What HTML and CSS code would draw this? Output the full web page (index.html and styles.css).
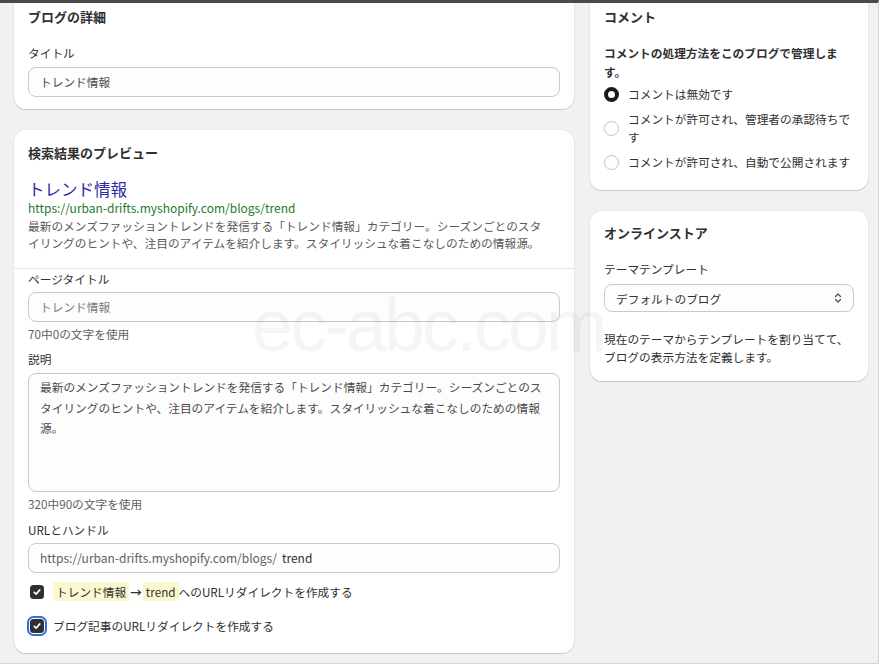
FILE: index.html
```html
<!DOCTYPE html>
<html lang="ja">
<head>
    <meta charset="UTF-8">
    <meta name="viewport" content="width=device-width, initial-scale=1.0">
    <title>ブログの編集</title>
    <link rel="stylesheet" href="styles.css">
</head>
<body>
    <div class="frame">
        <div class="layout">
            <!-- 左カラム -->
            <div class="main">
                <!-- ブログの詳細 -->
                <section class="card card-cut">
                    <h2 class="card-title">ブログの詳細</h2>
                    <div class="field field-first">
                        <div class="label">タイトル</div>
                        <div class="input">トレンド情報</div>
                    </div>
                </section>

                <!-- 検索結果のプレビュー -->
                <section class="card card-seo">
                    <div class="preview">
                        <h2 class="card-title">検索結果のプレビュー</h2>
                        <div class="preview-title">トレンド情報</div>
                        <div class="preview-url">https://urban-drifts.myshopify.com/blogs/trend</div>
                        <p class="preview-desc">最新のメンズファッショントレンドを発信する「トレンド情報」カテゴリー。シーズンごとのスタイリングのヒントや、注目のアイテムを紹介します。スタイリッシュな着こなしのための情報源。</p>
                    </div>
                    <div class="seo-form">
                        <div class="label">ページタイトル</div>
                        <div class="input input-placeholder">トレンド情報</div>
                        <div class="help">70中0の文字を使用</div>

                        <div class="label label-gap">説明</div>
                        <div class="textarea">最新のメンズファッショントレンドを発信する「トレンド情報」カテゴリー。シーズンごとのスタイリングのヒントや、注目のアイテムを紹介します。スタイリッシュな着こなしのための情報源。</div>
                        <div class="help">320中90の文字を使用</div>

                        <div class="label label-gap2">URLとハンドル</div>
                        <div class="input input-url"><span class="url-prefix">https://urban-drifts.myshopify.com/blogs/</span><span class="url-handle">trend</span></div>

                        <label class="check check-first">
                            <span class="box">
                                <svg width="10" height="10" viewBox="0 0 10 10"><path d="M2.2 5.2 L4.1 7.1 L7.8 2.9" fill="none" stroke="#fff" stroke-width="1.6" stroke-linecap="round" stroke-linejoin="round"/></svg>
                            </span>
                            <span><mark>トレンド情報</mark><b class="arrow">→</b><mark>trend</mark>へのURLリダイレクトを作成する</span>
                        </label>
                        <label class="check check-second">
                            <span class="box box-focus">
                                <svg width="10" height="10" viewBox="0 0 10 10"><path d="M2.2 5.2 L4.1 7.1 L7.8 2.9" fill="none" stroke="#fff" stroke-width="1.6" stroke-linecap="round" stroke-linejoin="round"/></svg>
                            </span>
                            <span>ブログ記事のURLリダイレクトを作成する</span>
                        </label>
                    </div>
                </section>
            </div>

            <!-- 右カラム -->
            <div class="side">
                <!-- コメント -->
                <section class="card card-cut card-comments">
                    <h2 class="card-title">コメント</h2>
                    <p class="sub-title">コメントの処理方法をこのブログで管理します。</p>
                    <div class="radios">
                        <div class="radio">
                            <span class="dot dot-on"></span>
                            <span>コメントは無効です</span>
                        </div>
                        <div class="radio">
                            <span class="dot"></span>
                            <span>コメントが許可され、管理者の承認待ちです</span>
                        </div>
                        <div class="radio">
                            <span class="dot"></span>
                            <span>コメントが許可され、自動で公開されます</span>
                        </div>
                    </div>
                </section>

                <!-- オンラインストア -->
                <section class="card card-store">
                    <h2 class="card-title">オンラインストア</h2>
                    <div class="label label-store">テーマテンプレート</div>
                    <div class="select">
                        <span>デフォルトのブログ</span>
                        <svg width="10" height="12" viewBox="0 0 10 12"><path d="M2.5 4.5 L5 2 L7.5 4.5 M2.5 7.5 L5 10 L7.5 7.5" fill="none" stroke="#4a4a4a" stroke-width="1.2" stroke-linecap="round" stroke-linejoin="round"/></svg>
                    </div>
                    <p class="store-desc">現在のテーマからテンプレートを割り当てて、ブログの表示方法を定義します。</p>
                </section>
            </div>
        </div>

        <!-- ウォーターマーク -->
        <div class="watermark">ec-abc.com</div>
    </div>
</body>
</html>
```

FILE: styles.css
```css
body {
    margin: 0;
    background-color: #ffffff;
    color: #303030;
    font-family: "Noto Sans CJK JP", sans-serif;
    font-size: 11.7px;
}

/* 画面の枠 */
.frame {
    position: relative;
    width: 879px;
    height: 664px;
    box-sizing: border-box;
    background-color: #f1f1f1;
    border-top: 3px solid #4a4a4a;
    border-right: 1px solid #d6d6d6;
    border-bottom: 1px solid #d6d6d6;
    overflow: hidden;
}

.layout {
    display: flex;
    gap: 16px;
    padding-left: 14px;
}

.main {
    width: 560px;
    display: flex;
    flex-direction: column;
    gap: 21px;
}

.side {
    width: 278px;
    display: flex;
    flex-direction: column;
    gap: 21px;
}

/* カード */
.card {
    background-color: #ffffff;
    border-radius: 12px;
    box-shadow: 0 1px 1px rgba(0, 0, 0, 0.14), 0 0 0 1px rgba(0, 0, 0, 0.03);
    padding: 14px 14px 12px;
}

/* 上が切れているカード */
.card-cut {
    border-top-left-radius: 0;
    border-top-right-radius: 0;
    padding-top: 5px;
}

.card-title {
    margin: 0;
    font-size: 13px;
    font-weight: 700;
    line-height: 18px;
    color: #303030;
}

.label {
    line-height: 18px;
    margin-bottom: 5px;
}

.field-first {
    margin-top: 18px;
}

/* 入力欄 */
.input {
    height: 30px;
    box-sizing: border-box;
    border: 1px solid #c9c9c9;
    border-radius: 8px;
    background-color: #fdfdfd;
    padding: 0 11px;
    line-height: 28px;
    color: #4a4a4a;
    white-space: nowrap;
}

.input-placeholder {
    color: #7a7a7a;
}

.input-url {
    font-size: 12px;
}

.url-prefix {
    color: #616161;
    margin-right: 5px;
}

.url-handle {
    color: #303030;
}

.textarea {
    height: 119px;
    box-sizing: border-box;
    border: 1px solid #c9c9c9;
    border-radius: 8px;
    background-color: #fdfdfd;
    padding: 3px 11px 3px 11px;
    line-height: 20.5px;
    color: #4a4a4a;
}

.help {
    margin-top: 3px;
    line-height: 18px;
    color: #616161;
}

/* 検索結果のプレビュー */
.card-seo {
    padding: 0 0 17px;
}

.preview {
    padding: 14px 14px 17px;
    border-bottom: 1px solid #e6e6e6;
}

.preview-title {
    margin-top: 16px;
    font-size: 16.5px;
    line-height: 22px;
    color: #2b2ba6;
}

.preview-url {
    font-size: 12px;
    line-height: 16px;
    color: #257a2c;
}

.preview-desc {
    margin: 1px 0 0;
    padding-right: 16px;
    line-height: 17px;
    color: #595959;
}

.seo-form {
    padding: 1px 14px 0;
}

.label-gap {
    margin-top: 7px;
}

.label-gap2 {
    margin-top: 8px;
    margin-bottom: 4px;
}

.seo-form .label:first-child {
    margin-bottom: 4px;
}

/* チェックボックス */
.check {
    display: flex;
    align-items: center;
    gap: 9px;
    line-height: 20px;
    padding-left: 2px;
}

.check-first {
    margin-top: 9px;
}

.check-second {
    margin-top: 14px;
}

.box {
    width: 14px;
    height: 14px;
    border-radius: 3.5px;
    background-color: #303030;
    display: flex;
    align-items: center;
    justify-content: center;
    flex-shrink: 0;
}

.box-focus {
    outline: 2px solid #2f6fd6;
    outline-offset: 1px;
}

mark {
    background-color: #fbf8cf;
    color: #303030;
    padding: 1px 3px;
}

.arrow {
    font-weight: 700;
    margin: 0 1px;
}

/* コメント */
.card-comments {
    padding-bottom: 19px;
}

.sub-title {
    margin: 17px 0 0;
    font-weight: 700;
    line-height: 19px;
}

.radios {
    margin-top: 4px;
    display: flex;
    flex-direction: column;
    gap: 7px;
}

.radio {
    display: flex;
    align-items: center;
    gap: 9px;
    line-height: 18px;
}

.dot {
    width: 15px;
    height: 15px;
    box-sizing: border-box;
    border-radius: 50%;
    border: 1px solid #c4c4c4;
    flex-shrink: 0;
}

.dot-on {
    border: 4px solid #1a1a1a;
}

/* オンラインストア */
.card-store {
    padding: 13px 14px 15px;
}

.label-store {
    margin-top: 18px;
    margin-bottom: 6px;
}

.select {
    height: 28px;
    box-sizing: border-box;
    border: 1px solid #c9c9c9;
    border-radius: 8px;
    background-color: #fdfdfd;
    padding: 0 10px 0 11px;
    display: flex;
    align-items: center;
    justify-content: space-between;
    color: #303030;
}

.store-desc {
    margin: 18px 0 0;
    line-height: 18px;
}

/* ウォーターマーク */
.watermark {
    position: absolute;
    left: 252px;
    top: 286px;
    font-family: "Liberation Sans", Arial, sans-serif;
    font-size: 74px;
    line-height: 1;
    letter-spacing: -3px;
    color: rgba(0, 0, 0, 0.04);
    pointer-events: none;
}
```
